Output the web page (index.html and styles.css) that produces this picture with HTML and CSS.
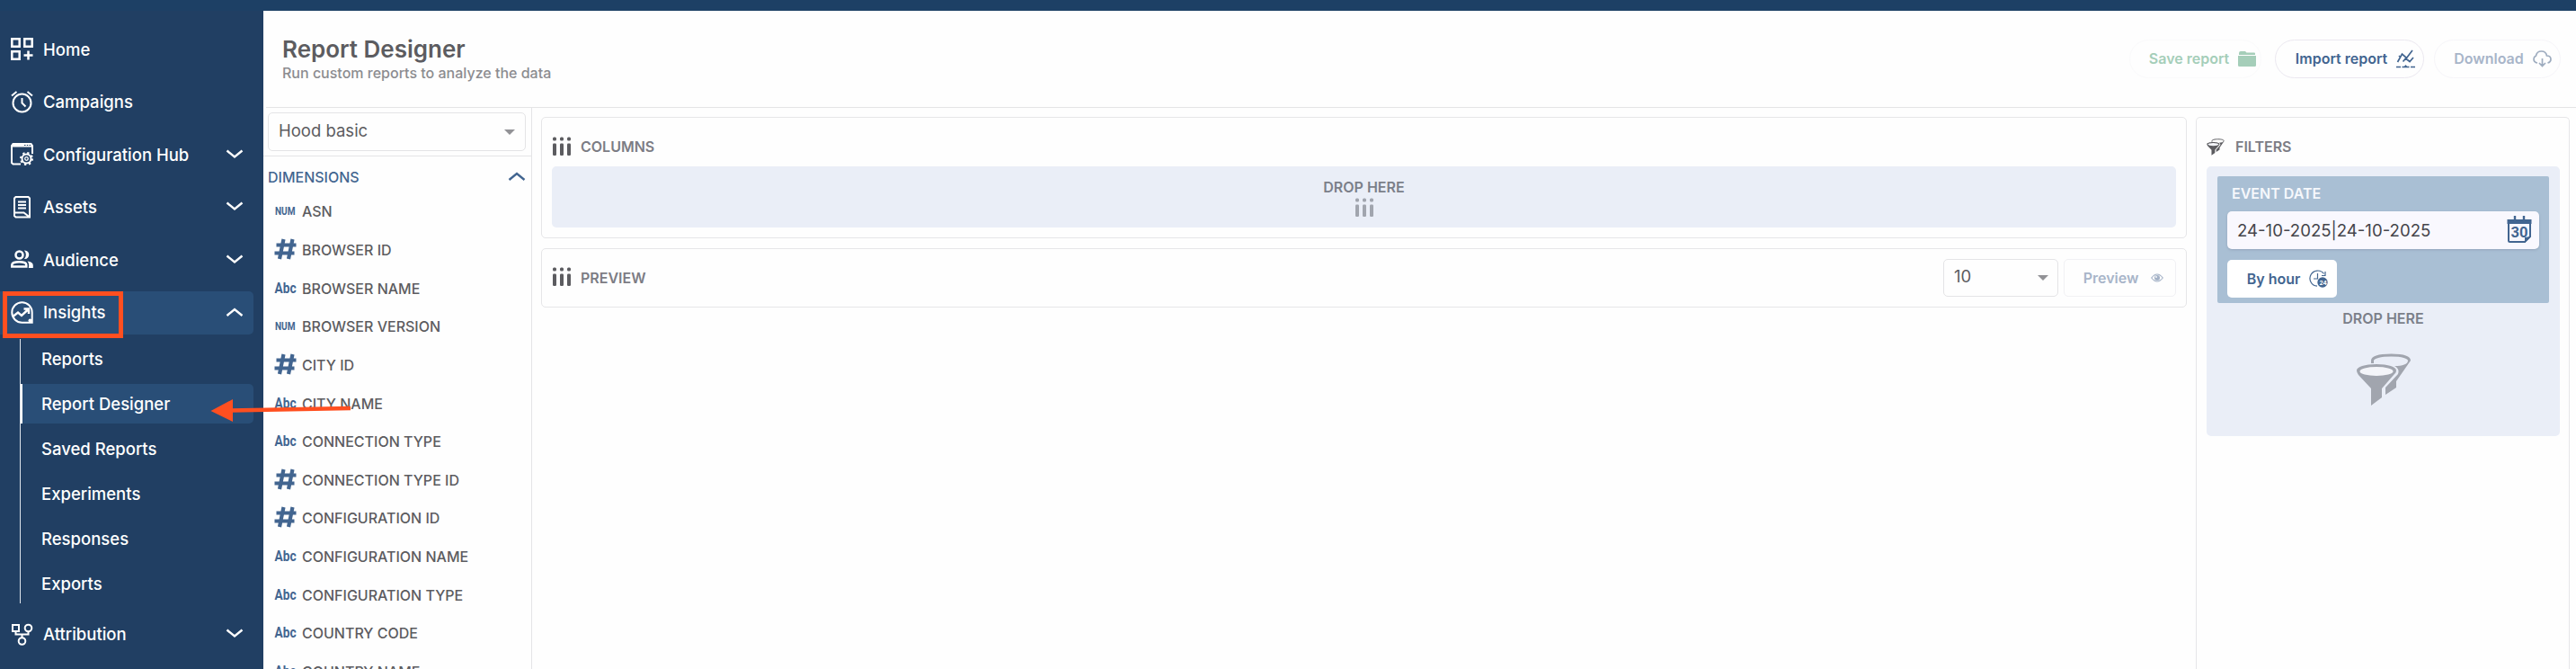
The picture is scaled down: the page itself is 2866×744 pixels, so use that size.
FILE: index.html
```html
<!DOCTYPE html>
<html lang="en">
  <head>
    <title>Report Designer</title>
    <meta charset="utf-8">
    <link rel="stylesheet" href="styles.css">
  </head>
  <body>
    <!-- shared icons -->
    <svg class="sprite" width="0" height="0">
      <symbol id="down" viewBox="0 0 20 12"><path d="M1.5 1.5 10 8.5l8.5-7" fill="none" stroke="currentColor" stroke-width="2.4"/></symbol>
      <symbol id="up" viewBox="0 0 20 12"><path d="M1.5 10 10 3l8.5 7" fill="none" stroke="currentColor" stroke-width="2.4"/></symbol>
      <symbol id="cols" viewBox="0 0 22 22">
        <g fill="currentColor">
          <rect x="1" y="0.5" width="4" height="4" rx="1.5"/><rect x="9" y="0.5" width="4" height="4" rx="1.5"/><rect x="17" y="0.5" width="4" height="4" rx="1.5"/>
          <rect x="1" y="7.5" width="4" height="13.5" rx="1.2"/><rect x="9" y="7.5" width="4" height="13.5" rx="1.2"/><rect x="17" y="7.5" width="4" height="13.5" rx="1.2"/>
        </g>
      </symbol>
      <symbol id="funnel" viewBox="0 0 62 58">
        <path d="M18.500 11V8c0-4 9.500-6 21-6s20 2 20 6" fill="none" stroke="currentColor" stroke-width="3"/>
        <path d="M61 8 45 31v7l-12 8v-8l14-15c1.500-4 0-7-4-9 9 0 15-2 15-6z" fill="currentColor"/>
        <path d="M1 19C1 15 10 12 23 12s22 3 22 7c0 2-1 3-2 4L29 39v10L17 58V39L3 24C2 22 1 21 1 19z" fill="currentColor"/>
        <ellipse cx="23" cy="20" rx="18.5" ry="5" class="funnel-hole"/>
      </symbol>
      <symbol id="hash" viewBox="0 0 25 24"><path d="M10.500 1 6 23M20.500 1 16 23M2.500 7.500h22M.5 16.500h22" fill="none" stroke="currentColor" stroke-width="4.200"/></symbol>
      <symbol id="abc" viewBox="0 0 25 24"><text x=".5" y="18" class="type-abc" textLength="24" lengthAdjust="spacingAndGlyphs">Abc</text></symbol>
      <symbol id="num" viewBox="0 0 25 24"><text x="1" y="17" class="type-num" textLength="22.5" lengthAdjust="spacingAndGlyphs">NUM</text></symbol>
    </svg>

    <div class="topbar"></div>
    <div class="app">
      <nav class="sidebar">
        <a class="nav-item">
          <svg class="nav-icon" viewBox="0 0 25 25"><path d="M1.300 1.300h8.400v8.400H1.300zM15.300 1.300h8.400v8.400h-8.400zM1.300 15.300h8.400v8.400H1.300zM19.500 14.500v10M14.500 19.500h10"/></svg>
          Home
        </a>
        <a class="nav-item">
          <svg class="nav-icon thin" viewBox="0 0 25 25"><circle cx="12.5" cy="13.5" r="10"/><path d="M12.500 8v5.500l4 4M1 5.500 6.500 1M24 5.500 18.500 1"/></svg>
          Campaigns
        </a>
        <a class="nav-item">
          <svg class="nav-icon thin" viewBox="0 0 25 25"><path d="M11 23.500H2.500L1 22V3l1.500-2h20L24 3v9"/><path d="M1 1h23v3.500H1z" fill="#fff" stroke="none"/><path d="M15 2.500h7.500" stroke="#213f63" stroke-width="1.2" stroke-dasharray="1.5 1.3"/><circle cx="17.5" cy="17.5" r="5"/><circle cx="17.5" cy="17.5" r="1.8" stroke-width="1.3"/><circle cx="17.5" cy="17.5" r="6.5" stroke-width="2" stroke-dasharray="2.3 2.8"/></svg>
          Configuration Hub
          <svg class="chev"><use href="#down"/></svg>
        </a>
        <a class="nav-item">
          <svg class="nav-icon thin" viewBox="0 0 25 25"><path d="M4 2.500 5.500 1h14L21 2.500v21H5.500L4 22zM8 6.500h9M8 10h9M8 13.500h9M4.500 18.500h10l6.500 5"/></svg>
          Assets
          <svg class="chev"><use href="#down"/></svg>
        </a>
        <a class="nav-item">
          <svg class="nav-icon" viewBox="0 0 25 25"><circle cx="9.5" cy="7.5" r="4"/><path d="M1.300 20.500v-2c0-2 4-3.200 8-3.200s8 1.200 8 3.200v2z"/><path d="M15 2.500c7-.5 7 10 0 9.500 2.500-3 2.500-6.500 0-9.500zM18.500 14.500c4 .5 6.300 2 6.300 4.500v3h-5c.8-3 .5-5.500-1.300-7.500z" fill="#fff" stroke="none"/></svg>
          Audience
          <svg class="chev"><use href="#down"/></svg>
        </a>
        <a class="nav-item open">
          <svg class="nav-icon thin" viewBox="0 0 25 25"><path d="M23.700 12.500v11.200H12.500A11.200 11.200 0 1 1 23.700 12.500z"/><path d="M3 16.500l5-4 4 3.500 7-6.500M14.500 8.500h5.500V14" stroke-width="2.4"/><circle cx="21.5" cy="21.5" r="2" fill="#fff" stroke="none"/></svg>
          Insights
          <svg class="chev"><use href="#up"/></svg>
        </a>
        <div class="submenu">
          <a class="sub-item">Reports</a>
          <a class="sub-item active">Report Designer</a>
          <a class="sub-item">Saved Reports</a>
          <a class="sub-item">Experiments</a>
          <a class="sub-item">Responses</a>
          <a class="sub-item">Exports</a>
        </div>
        <a class="nav-item">
          <svg class="nav-icon thin" viewBox="0 0 25 25"><path d="M2 2h7v7H2zM5.500 9v3.500h14V9.500M12.500 12.500v3.500"/><circle cx="19.5" cy="5.500" r="3.8"/><circle cx="12.5" cy="20" r="3.8"/></svg>
          Attribution
          <svg class="chev"><use href="#down"/></svg>
        </a>
      </nav>

      <main class="main">
        <header class="header">
          <div>
            <h1>Report Designer</h1>
            <p>Run custom reports to analyze the data</p>
          </div>
          <div class="actions">
            <button class="pill save">Save report
              <svg width="20" height="17" viewBox="0 0 20 17"><path d="M1 2q0-2 2-2h5l1.500 1.500H18q1 0 1 1V4H1z" fill="#a5ceb9"/><path d="M0 5h20v10.500q0 1.500-1.500 1.500h-17Q0 17 0 15.500z" fill="#a5ceb9"/></svg>
            </button>
            <button class="pill import">Import report
              <svg width="21" height="21" viewBox="0 0 21 21" fill="none" stroke="#426590" stroke-width="1.7"><path d="M1.500 14 6.500 5l5 4.500L18 1M3 8l1-1M7.500 13.500l3-3.500 4.500 3.500 4-4.500M0 19.500h5M16 19.500h5M6.500 19.500h8"/><path d="M8 20l2.500-3 2.500 3z" fill="#426590" stroke="none"/></svg>
            </button>
            <button class="pill download">Download
              <svg width="21" height="19" viewBox="0 0 21 19" fill="none" stroke="#9eacbf" stroke-width="1.7"><path d="M5 14C2 13.500 1 11.500 1 9.500S2.500 6.500 3.500 6C4 3 6.500 1 9.500 1s5.500 2 6 5c3 0 4.500 2 4.500 4s-1.500 3.500-3.500 4M10.500 9v8.500M7 14l3.500 3.500L14 14"/></svg>
            </button>
          </div>
        </header>

        <div class="content">
          <aside class="fields">
            <div class="report-type">
              <div class="select">Hood basic <i class="caret"></i></div>
            </div>
            <div class="group-title">DIMENSIONS <svg class="chev"><use href="#up"/></svg></div>
            <ul>
              <li><svg><use href="#num"/></svg>ASN</li>
              <li><svg><use href="#hash"/></svg>BROWSER ID</li>
              <li><svg><use href="#abc"/></svg>BROWSER NAME</li>
              <li><svg><use href="#num"/></svg>BROWSER VERSION</li>
              <li><svg><use href="#hash"/></svg>CITY ID</li>
              <li><svg><use href="#abc"/></svg>CITY NAME</li>
              <li><svg><use href="#abc"/></svg>CONNECTION TYPE</li>
              <li><svg><use href="#hash"/></svg>CONNECTION TYPE ID</li>
              <li><svg><use href="#hash"/></svg>CONFIGURATION ID</li>
              <li><svg><use href="#abc"/></svg>CONFIGURATION NAME</li>
              <li><svg><use href="#abc"/></svg>CONFIGURATION TYPE</li>
              <li><svg><use href="#abc"/></svg>COUNTRY CODE</li>
              <li><svg><use href="#abc"/></svg>COUNTRY NAME</li>
            </ul>
          </aside>

          <section class="center">
            <div class="panel">
              <div class="panel-title"><svg class="cols"><use href="#cols"/></svg>COLUMNS</div>
              <div class="drop">
                DROP HERE
                <svg class="cols"><use href="#cols"/></svg>
              </div>
            </div>
            <div class="panel preview">
              <div class="preview-title"><svg class="cols"><use href="#cols"/></svg>PREVIEW</div>
              <div class="select rows">10 <i class="caret"></i></div>
              <button class="preview-btn">Preview
                <svg width="14" height="10" viewBox="0 0 14 10"><path d="M.7 5Q7-3 13.300 5 7 13 .7 5z" fill="none" stroke="#a3b1c6" stroke-width="1.2"/><circle cx="7" cy="5" r="3" fill="#a3b1c6"/><circle cx="6" cy="4" r=".9" fill="#fff"/></svg>
              </button>
            </div>
          </section>

          <aside class="filters">
            <div class="panel-title"><svg class="funnel-small"><use href="#funnel"/></svg>FILTERS</div>
            <div class="filter-zone">
              <div class="event">
                <div class="event-label">EVENT DATE</div>
                <div class="date">
                  24-10-2025|24-10-2025
                  <svg width="28" height="31" viewBox="0 0 28 31"><path d="M2 7v20.500q0 1.500 1.500 1.500H20l6-6V7" fill="none" stroke="#426590" stroke-width="2"/><path d="M.5 4h27v5H.5zM20 30v-6l7-1z" fill="#426590"/><path d="M9 0v5M19 0v5" stroke="#426590" stroke-width="2.4"/><text x="4.5" y="24" class="cal-day" textLength="19" lengthAdjust="spacingAndGlyphs">30</text></svg>
                </div>
                <button class="hour">By hour
                  <svg width="21" height="20" viewBox="0 0 21 20"><path d="M9 18.200A8.600 8.600 0 1 1 16.500 4.500M9.500 4v6H5M18 2v4.500h-4M12 10h2" fill="none" stroke="#426590" stroke-width="1.2"/><circle cx="15" cy="14" r="5.7" fill="#426590"/><text x="11.5" y="16.500" class="h24">24</text></svg>
                </button>
              </div>
              <div class="drop-label">DROP HERE</div>
              <svg class="funnel-big"><use href="#funnel"/></svg>
            </div>
          </aside>
        </div>
      </main>
    </div>

    <!-- annotations over the page -->
    <svg class="marks" width="400" height="744">
      <rect x="5.5" y="326.5" width="129" height="47" fill="none" stroke="#ff4f20" stroke-width="5"/>
      <path d="M256 456.500 390 454" stroke="#ff4f20" stroke-width="4.5"/>
      <path d="M234.500 457 259 444v25z" fill="#ff4f20"/>
    </svg>
  </body>
</html>
```
FILE: styles.css
```css
* {
  box-sizing: border-box;
}
body {
  margin: 0;
  height: 744px;
  overflow: hidden;
  background: #fefefe;
  color: #5c5c60;
  font: 500 16px Inter, "Open Sans", sans-serif;
}
h1, p, ul {
  margin: 0;
  padding: 0;
}
button {
  font: inherit;
  font-weight: 600;
  padding: 0;
}
svg {
  flex: none;
}
.sprite {
  display: none;
}
.topbar {
  height: 12px;
  background: #1d4065;
}
.app {
  display: flex;
  height: 732px;
}

/* sidebar */
.sidebar {
  width: 293px;
  flex: none;
  padding: 19px 11px 0 0;
  display: flex;
  flex-direction: column;
  gap: 10.6px;
  background: #213f63;
  color: #fff;
  font-size: 18.5px;
}
.nav-item {
  height: 48px;
  flex: none;
  padding: 0 11px 1px 12px;
  display: flex;
  align-items: center;
  gap: 11px;
  border-radius: 0 5px 5px 0;
}
.nav-item.open {
  background: #294e77;
}
.nav-icon {
  width: 25px;
  height: 25px;
  fill: none;
  stroke: #fff;
  stroke-width: 2.5;
}
.nav-icon.thin {
  stroke-width: 2;
}
.chev {
  width: 20px;
  height: 12px;
  margin-left: auto;
}
.submenu {
  margin: -5.3px 0 0 22px;
  border-left: 1px solid #dfe5ec;
  display: flex;
  flex-direction: column;
  gap: 6px;
}
.sub-item {
  height: 44px;
  line-height: 44px;
  padding-left: 23px;
}
.sub-item.active {
  padding-left: 21px;
  border-left: 2px solid #fff;
  border-radius: 0 5px 5px 0;
  background: #294e77;
}

/* header */
.main {
  flex: 1;
  display: flex;
  flex-direction: column;
}
.header {
  height: 108px;
  flex: none;
  margin-left: 3px;
  padding: 0 24px 0 18px;
  display: flex;
  justify-content: space-between;
  align-items: flex-start;
  border-bottom: 1px solid #e4e4e6;
}
h1 {
  padding-top: 27px;
  font-size: 26px;
  font-weight: 600;
  line-height: 31px;
}
p {
  color: #8c8c90;
  line-height: 23px;
}
.actions {
  display: flex;
  padding-top: 32px;
}
.pill {
  height: 43px;
  padding-bottom: 1px;
  display: flex;
  align-items: center;
  justify-content: center;
  gap: 10px;
  border: 1px solid #f6f5f9;
  border-radius: 22px;
  background: none;
}
.save {
  width: 147px;
  margin-right: 15px;
  padding-left: 16px;
  color: #a5ceb9;
  border-color: #fafafb;
}
.import {
  width: 166px;
  margin-right: 11px;
  padding-left: 13px;
  border-color: #ebe8f0;
  color: #426590;
}
.download {
  width: 141px;
  margin-right: -7px;
  padding-left: 12px;
  color: #a8b5c9;
}

/* field list */
.content {
  flex: 1;
  display: flex;
  min-height: 0;
}
.fields {
  width: 299px;
  flex: none;
  overflow: hidden;
  border-right: 1px solid #e4e4e6;
}
.report-type {
  height: 54px;
  padding: 5px;
  border-bottom: 1px solid #e4e4e6;
}
.select {
  width: 287px;
  height: 43px;
  padding: 0 11px 4px;
  display: flex;
  align-items: center;
  justify-content: space-between;
  border: 1px solid #e4e4e6;
  border-radius: 5px;
  font-size: 18.5px;
  font-weight: 400;
}
.caret {
  margin-top: 4px;
  border: 6px solid transparent;
  border-top-color: #929296;
  border-bottom: 0;
}
.group-title {
  height: 40px;
  padding: 6px 6px 0 5px;
  display: flex;
  align-items: center;
  color: #426590;
}
.group-title .chev {
  margin-bottom: 2px;
}
ul {
  list-style: none;
}
li {
  height: 42.65px;
  padding-left: 12px;
  display: flex;
  align-items: center;
  gap: 6px;
}
li svg {
  width: 25px;
  height: 24px;
  margin-bottom: 2px;
  color: #426590;
}
.type-abc, .type-num, .cal-day {
  font-family: Roboto, sans-serif;
  font-weight: 700;
  fill: #426590;
}
.type-abc {
  font-size: 17px;
}
.type-num {
  font-size: 13.5px;
}

/* report canvas */
.center {
  flex: 1;
  padding: 10px 0 0 10px;
  display: flex;
  flex-direction: column;
  gap: 11px;
}
.panel {
  border: 1px solid #e6e6e8;
  border-radius: 5px;
  padding: 11px;
}
.cols {
  width: 22px;
  height: 22px;
}
.panel-title, .preview-title {
  height: 43px;
  display: flex;
  align-items: center;
  gap: 10px;
  font-weight: 600;
  color: #7c7c84;
}
.panel-title {
  padding-bottom: 1px;
}
.panel-title svg, .preview-title svg {
  color: #5c5c60;
}
.drop {
  height: 68px;
  padding-top: 13px;
  display: flex;
  flex-direction: column;
  align-items: center;
  gap: 2px;
  border-radius: 5px;
  background: #eaeef7;
  color: #7b7f89;
  font-weight: 600;
  line-height: 20px;
}
.drop svg {
  color: #a1a5ae;
}
.preview {
  height: 66px;
  display: flex;
  align-items: center;
}
.preview-title {
  flex: 1;
}
.preview-title svg {
  margin-bottom: 2px;
}
.rows {
  width: 128px;
  height: 42px;
  margin-right: 6px;
  padding-right: 10px;
}
.preview-btn {
  width: 125px;
  height: 42px;
  padding-left: 8px;
  display: flex;
  align-items: center;
  justify-content: center;
  gap: 14px;
  border: 1px solid #f1f1f4;
  border-radius: 5px;
  background: none;
  color: #a8b5c9;
}

/* filters */
.filters {
  width: 416px;
  flex: none;
  margin: 10px 7px 0 10px;
  padding: 11px 10px 0 11px;
  border: 1px solid #e6e6e8;
  border-bottom: 0;
  border-radius: 5px 5px 0 0;
}
.funnel-small {
  width: 20px;
  height: 19px;
}
.filters .panel-title {
  gap: 12px;
}
.funnel-hole {
  fill: #f4f5f9;
}
.filter-zone {
  height: 300px;
  padding: 11px 12px 0;
  display: flex;
  flex-direction: column;
  align-items: center;
  border-radius: 5px;
  background: #eaeef7;
}
.event {
  width: 100%;
  height: 141px;
  padding: 9px 11px 0;
  border-radius: 2px;
  background: #a9bfd4;
}
.event-label {
  padding-left: 5px;
  line-height: 21px;
  color: #f6f8fc;
  font-weight: 600;
}
.date {
  height: 42px;
  margin-top: 9px;
  padding: 0 8px 1px 11px;
  display: flex;
  align-items: center;
  justify-content: space-between;
  border-radius: 5px;
  background: #f9f8fe;
  box-shadow: 0 1px 3px #93a5bb;
  color: #45454b;
  font-size: 18.6px;
  font-weight: 400;
}
.cal-day {
  font-size: 16px;
}
.hour {
  width: 122px;
  height: 42px;
  margin-top: 12px;
  padding-left: 12px;
  display: flex;
  align-items: center;
  justify-content: center;
  gap: 10px;
  border: 0;
  border-radius: 5px;
  background: #fff;
  color: #426590;
}
.h24 {
  font: 700 6.5px Inter, sans-serif;
  fill: #fff;
}
.drop-label {
  margin-top: 7px;
  line-height: 20px;
  font-weight: 600;
  color: #7b7f89;
}
.funnel-big {
  width: 62px;
  height: 58px;
  margin-top: 29px;
  color: #a1a5ae;
}

.marks {
  position: absolute;
  left: 0;
  top: 0;
}
```
